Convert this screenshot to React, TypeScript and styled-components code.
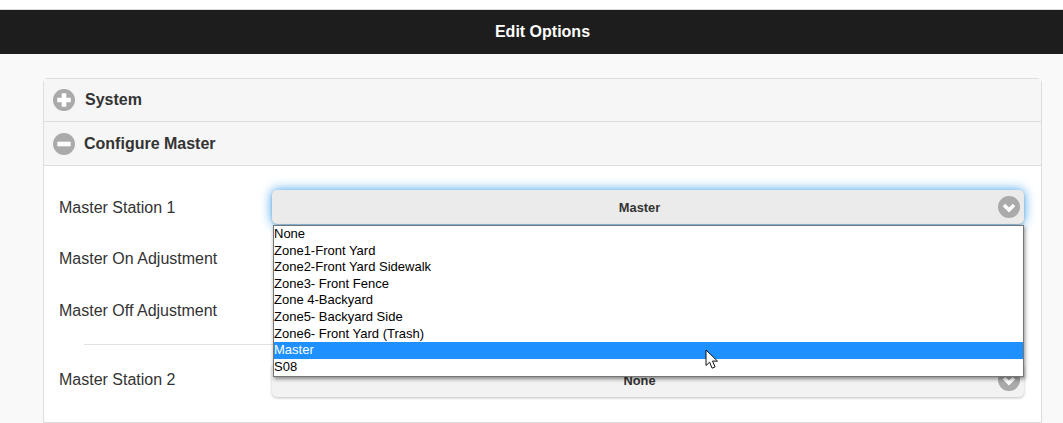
import React from 'react';
import styled, { createGlobalStyle } from 'styled-components';

const GlobalStyle = createGlobalStyle`
  html, body {
    margin: 0;
    padding: 0;
    height: 423px;
    overflow: hidden;
    background: #f9f9f9;
    font-family: "Liberation Sans", Arial, sans-serif;
  }
`;

const stations = [
  'None',
  'Zone1-Front Yard',
  'Zone2-Front Yard Sidewalk',
  'Zone3- Front Fence',
  'Zone 4-Backyard',
  'Zone5- Backyard Side',
  'Zone6- Front Yard (Trash)',
  'Master',
  'S08',
];

const RoundIcon: React.FC<{ kind: 'plus' | 'minus' | 'down' }> = ({ kind }) => (
  <svg width="22" height="22" viewBox="0 0 22 22">
    <circle cx="11" cy="11" r="11" fill="#aaaaaa" />
    {kind === 'plus' && <path d="M4.3 11h13.4M11 4.3v13.4" stroke="#fff" strokeWidth="4.6" />}
    {kind === 'minus' && <path d="M4.3 11h13.4" stroke="#fff" strokeWidth="4.6" />}
    {kind === 'down' && <path d="M6 9l5 5 5-5" stroke="#fff" strokeWidth="3.6" fill="none" />}
  </svg>
);

const App: React.FC = () => {
  return (
    <Page>
      <GlobalStyle />
      <Header>Edit Options</Header>
      <Body>
        <Card>
          <SectionHead>
            <RoundIcon kind="plus" />
            <SectionTitle $nudge={1}>System</SectionTitle>
          </SectionHead>
          <SectionHead>
            <RoundIcon kind="minus" />
            <SectionTitle>Configure Master</SectionTitle>
          </SectionHead>
          <Content>
            <StationRow>
              <StationLabel>Master Station 1</StationLabel>
              <SelectWrap>
                <SelectButton $focused>
                  Master
                  <Chevron>
                    <RoundIcon kind="down" />
                  </Chevron>
                </SelectButton>
                <OptionList>
                  {stations.map((name) => (
                    <Option key={name} $selected={name === 'Master'}>
                      {name}
                    </Option>
                  ))}
                </OptionList>
                <Cursor width="14" height="21" viewBox="0 0 14 21">
                  <path
                    d="M1 1v15.5l3.6-3.3 2.5 6 3-1.3-2.6-5.8h5z"
                    fill="#fff"
                    stroke="#111"
                    strokeWidth="1"
                    strokeLinejoin="miter"
                  />
                </Cursor>
              </SelectWrap>
            </StationRow>
            <AdjustRow>
              <Label>Master On Adjustment</Label>
            </AdjustRow>
            <AdjustRow>
              <Label>Master Off Adjustment</Label>
            </AdjustRow>
            <Divider />
            <StationRow>
              <Label>Master Station 2</Label>
              <SelectWrap>
                <SelectButton>
                  None
                  <Chevron>
                    <RoundIcon kind="down" />
                  </Chevron>
                </SelectButton>
              </SelectWrap>
            </StationRow>
          </Content>
        </Card>
      </Body>
    </Page>
  );
};

export default App;

const Page = styled.div`
  height: 423px;
  padding-top: 9px;
  box-sizing: border-box;
  background: linear-gradient(#fff 9px, #f9f9f9 9px);
  overflow: hidden;
`;

const Header = styled.div`
  height: 44px;
  padding-left: 22px;
  border-top: 1px solid #d8d8d8;
  background: #1d1d1d;
  color: #fff;
  font-size: 16px;
  font-weight: bold;
  line-height: 43px;
  text-align: center;
`;

const Body = styled.div`
  padding: 24px 21px 0 43px;
`;

const Card = styled.div`
  height: 345px;
  box-sizing: border-box;
  border: 1px solid #dddddd;
  border-radius: 5px 5px 0 0;
  background: #fff;
`;

const SectionHead = styled.div`
  height: 44px;
  box-sizing: border-box;
  display: flex;
  align-items: center;
  gap: 9px;
  padding-left: 9px;
  background: #f6f6f6;
  border-bottom: 1px solid #dddddd;

  &:first-child {
    height: 43px;
  }
`;

const SectionTitle = styled.span<{ $nudge?: number }>`
  font-size: 16px;
  font-weight: bold;
  color: #333;
  margin-left: ${(p) => p.$nudge || 0}px;
`;

const Content = styled.div`
  padding: 24px 17px 0 15px;
`;

const StationRow = styled.div`
  display: grid;
  grid-template-columns: 213px 1fr;
  align-items: center;
  height: 34px;
`;

const AdjustRow = styled.div`
  display: flex;
  align-items: center;
  height: 34px;
  margin-top: 18px;
`;

const Label = styled.div`
  font-size: 16px;
  color: #333;
`;

const StationLabel = styled(Label)`
  padding-top: 1px;
`;

const SelectWrap = styled.div`
  position: relative;
`;

const SelectButton = styled.div<{ $focused?: boolean }>`
  position: relative;
  height: 34px;
  box-sizing: border-box;
  padding-right: 17px;
  border-radius: 5px;
  background: ${(p) => (p.$focused ? '#ebebeb' : '#f2f2f2')};
  color: #333;
  font-size: 12.8px;
  font-weight: bold;
  line-height: 35px;
  text-align: center;
  box-shadow: ${(p) =>
    p.$focused
      ? '0 0 12px #389ce8, 0 1px 2px rgba(0, 0, 0, 0.25)'
      : '0 1px 3px rgba(0, 0, 0, 0.25)'};
`;

const Chevron = styled.span`
  position: absolute;
  top: 6px;
  right: 4px;
  height: 22px;
`;

const OptionList = styled.ul`
  position: absolute;
  top: 35px;
  left: 1px;
  right: 0;
  z-index: 2;
  margin: 0;
  padding: 0 0 0.6px;
  list-style: none;
  background: #fff;
  border: 1px solid #767676;
  box-shadow: 1px 2px 4px rgba(0, 0, 0, 0.45);
  font-size: 13px;
`;

const Option = styled.li<{ $selected?: boolean }>`
  height: 16.6px;
  line-height: 16.6px;
  white-space: nowrap;
  color: ${(p) => (p.$selected ? '#fff' : '#000')};
  background: ${(p) => (p.$selected ? '#1e90ff' : 'transparent')};
`;

const Cursor = styled.svg`
  position: absolute;
  top: 159px;
  left: 433px;
  z-index: 3;
`;

const Divider = styled.hr`
  height: 1px;
  margin: 16px 24px 18px 25px;
  border: 0;
  background: #e2e2e2;
`;
